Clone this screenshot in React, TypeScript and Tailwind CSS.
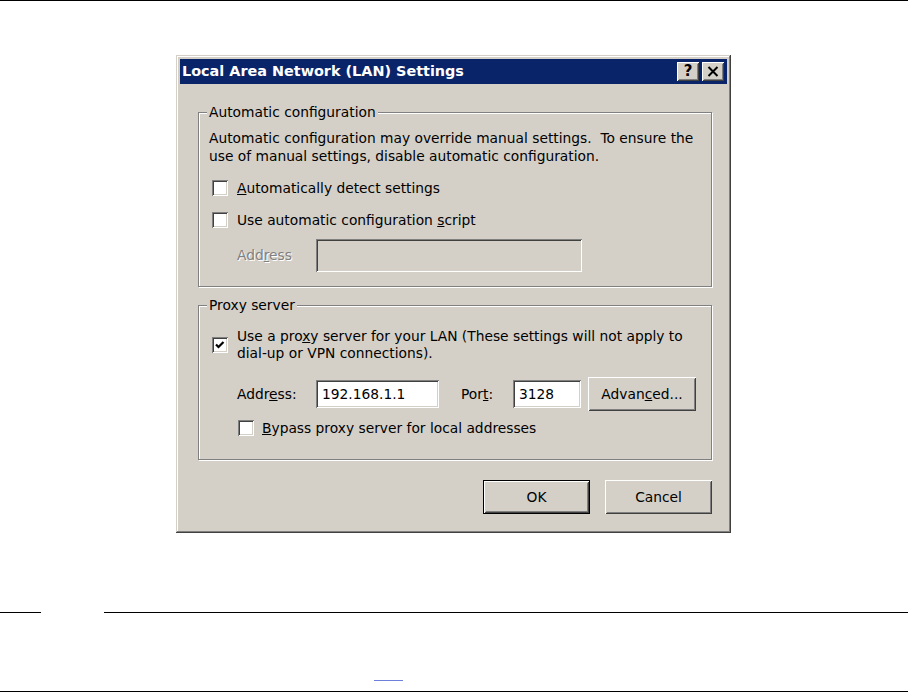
const sunken =
  "shadow-[inset_1px_1px_0_#808080,inset_-1px_-1px_0_#ffffff,inset_2px_2px_0_#404040,inset_-2px_-2px_0_#d4d0c8]";
const raised =
  "shadow-[inset_1px_1px_0_#ffffff,inset_-1px_-1px_0_#404040,inset_2px_2px_0_#d4d0c8,inset_-2px_-2px_0_#808080]";
const etched = "shadow-[inset_1px_1px_0_#ffffff,1px_1px_0_#ffffff]";

const CheckBox = ({ checked }: { checked?: boolean }) => (
  <span className={`flex h-[16px] w-[16px] shrink-0 items-center justify-center bg-white ${sunken}`}>
    {checked && (
      <svg width="16" height="16" viewBox="0 0 16 16">
        <path d="M4 7.5 L6.5 10 L11.5 5" fill="none" stroke="#000" strokeWidth="2.2" />
      </svg>
    )}
  </span>
);

const Button = ({ label, isDefault }: { label: React.ReactNode; isDefault?: boolean }) => (
  <div
    className={`flex h-[34px] w-[107px] items-center justify-center ${
      isDefault ? "border border-black" : ""
    }`}
  >
    <div className={`flex h-full w-full items-center justify-center bg-[#d4d0c8] ${raised}`}>
      {label}
    </div>
  </div>
);

const GroupBox = ({ title, children, className }: { title: string; children: React.ReactNode; className?: string }) => (
  <fieldset className={`m-0 w-[514px] border border-[#808080] p-0 ${etched} ${className ?? ""}`}>
    <legend className="ml-[8px] bg-[#d4d0c8] px-[2px] leading-[17px]">{title}</legend>
    {children}
  </fieldset>
);

const Dialog = () => (
  <div
    className={`ml-[176px] mt-[54px] flex h-[478px] w-[555px] flex-col bg-[#d4d0c8] p-[4px] shadow-[inset_-1px_-1px_0_#404040,inset_1px_1px_0_#d4d0c8,inset_-2px_-2px_0_#808080,inset_2px_2px_0_#ffffff]`}
  >
    <div className="flex h-[25px] items-center justify-between bg-[#0a246a] pl-[2px] pr-[3px]">
      <span className="text-[14.4px] font-bold text-white">Local Area Network (LAN) Settings</span>
      <div className="flex gap-[3px]">
        <div className={`flex h-[19px] w-[22px] items-center justify-center bg-[#d4d0c8] ${raised}`}>
          <span className="text-[15px] font-bold leading-none">?</span>
        </div>
        <div className={`flex h-[19px] w-[22px] items-center justify-center bg-[#d4d0c8] ${raised}`}>
          <svg width="12" height="11" viewBox="0 0 12 11">
            <path d="M1.5 1 L10.5 10 M10.5 1 L1.5 10" stroke="#000" strokeWidth="2" />
          </svg>
        </div>
      </div>
    </div>

    <div className="flex flex-col pl-[18px] pt-[20px]">
      <GroupBox title="Automatic configuration">
        <div className="flex flex-col pb-[14px] pl-[10px]">
          <p className="mt-[8px] leading-[18px]">
            Automatic configuration may override manual settings.&nbsp; To ensure the
            <br />
            use of manual settings, disable automatic configuration.
          </p>
          <div className="ml-[3px] mt-[11px] flex h-[24px] items-center gap-[9px]">
            <CheckBox />
            <span>
              <u>A</u>utomatically detect settings
            </span>
          </div>
          <div className="ml-[3px] mt-[8px] flex h-[24px] items-center gap-[9px]">
            <CheckBox />
            <span>
              Use automatic configuration <u>s</u>cript
            </span>
          </div>
          <div className="ml-[3px] mt-[7px] flex h-[33px] items-center pl-[25px]">
            <span className="w-[79px] text-[#808080] [text-shadow:1px_1px_0_#ffffff]">
              Add<u>r</u>ess
            </span>
            <div className={`h-[33px] w-[266px] bg-[#d4d0c8] ${sunken}`} />
          </div>
        </div>
      </GroupBox>

      <GroupBox title="Proxy server" className="mt-[10px]">
        <div className="flex flex-col pb-[19px] pl-[13px]">
          <div className="mt-[14px] flex items-center gap-[9px]">
            <CheckBox checked />
            <span className="leading-[17px]">
              Use a pro<u>x</u>y server for your LAN (These settings will not apply to
              <br />
              dial-up or VPN connections).
            </span>
          </div>
          <div className="mt-[15px] flex h-[34px] items-center pl-[25px]">
            <span className="w-[79px]">
              Addr<u>e</u>ss:
            </span>
            <div className={`flex h-[28px] w-[123px] items-center bg-white pl-[6px] ${sunken}`}>
              192.168.1.1
            </div>
            <span className="ml-[22px] w-[52px]">
              Por<u>t</u>:
            </span>
            <div className={`flex h-[28px] w-[68px] items-center bg-white pl-[6px] ${sunken}`}>3128</div>
            <div className="ml-[7px]">
              <div className={`flex h-[34px] w-[108px] items-center justify-center bg-[#d4d0c8] ${raised}`}>
                <span>
                  Advan<u>c</u>ed...
                </span>
              </div>
            </div>
          </div>
          <div className="mt-[5px] flex h-[24px] items-center gap-[8px] pl-[26px]">
            <CheckBox />
            <span>
              <u>B</u>ypass proxy server for local addresses
            </span>
          </div>
        </div>
      </GroupBox>

      <div className="mt-[20px] flex w-[514px] justify-end gap-[15px]">
        <Button label="OK" isDefault />
        <Button label="Cancel" />
      </div>
    </div>
  </div>
);

export default function App() {
  return (
    <div className="flex h-[692px] w-full flex-col bg-white font-['DejaVu_Sans',Verdana,sans-serif] text-[13.8px] text-black">
      <div className="h-px w-full shrink-0 bg-black" />
      <Dialog />
      <div className="mt-[79px] flex h-px shrink-0">
        <div className="w-[41px] bg-black" />
        <div className="ml-[63px] flex-1 bg-black" />
      </div>
      <div className="ml-[374px] mt-[67px] h-px w-[29px] shrink-0 bg-[#6b7fdb]" />
      <div className="mt-auto h-px w-full shrink-0 bg-black" />
    </div>
  );
}
